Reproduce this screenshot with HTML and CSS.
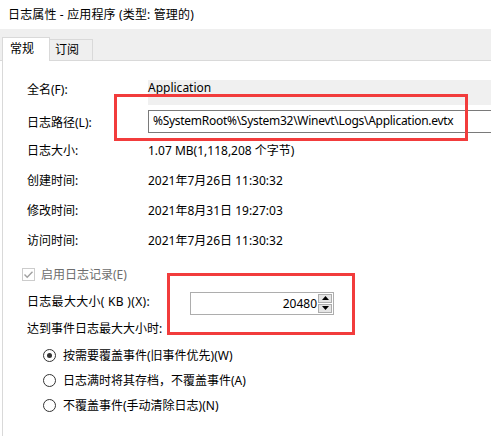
FILE: index.html
```html
<!DOCTYPE html>
<html lang="zh-CN">
<head>
<meta charset="utf-8">
<title>日志属性</title>
<link rel="stylesheet" href="styles.css">
</head>
<body>
<div class="window">
  <div class="titlebar">日志属性 - 应用程序 (类型: 管理的)</div>
  <div class="tabstrip">
    <div class="tab tab-active">常规</div>
    <div class="tab">订阅</div>
  </div>
  <div class="panel">
    <div class="row row-name">
      <span class="label">全名(F):</span>
      <span class="readonly">Application</span>
    </div>
    <div class="row row-path">
      <span class="label">日志路径(L):</span>
      <span class="textbox">%SystemRoot%\System32\Winevt\Logs\Application.evtx</span>
    </div>
    <div class="row row-info r1">
      <span class="label">日志大小:</span>
      <span class="value">1.07 MB(1,118,208 个字节)</span>
    </div>
    <div class="row row-info">
      <span class="label">创建时间:</span>
      <span class="value">2021年7月26日 11:30:32</span>
    </div>
    <div class="row row-info">
      <span class="label">修改时间:</span>
      <span class="value">2021年8月31日 19:27:03</span>
    </div>
    <div class="row row-info">
      <span class="label">访问时间:</span>
      <span class="value">2021年7月26日 11:30:32</span>
    </div>
    <div class="row row-check">
      <span class="checkbox">
        <svg width="13" height="13" viewBox="0 0 13 13"><rect x="0.5" y="0.5" width="12" height="12" fill="#fff" stroke="#cccccc"/><path d="M2.5 6.5 L5.2 9.2 L10.5 3.8" fill="none" stroke="#a0a0a0" stroke-width="1.4"/></svg>
      </span>
      <span class="disabled">启用日志记录(E)</span>
    </div>
    <div class="row row-size">
      <span class="label label-size">日志最大大小( KB )(X):</span>
      <span class="spinbox">
        <span class="spin-value">20480</span>
        <span class="spin-buttons">
          <span class="spin-btn"><svg width="7" height="4" viewBox="0 0 7 4"><path d="M0 4 L3.5 0 L7 4 Z" fill="#000"/></svg></span>
          <span class="spin-btn"><svg width="7" height="4" viewBox="0 0 7 4"><path d="M0 0 L3.5 4 L7 0 Z" fill="#000"/></svg></span>
        </span>
      </span>
    </div>
    <div class="row row-when">
      <span class="label">达到事件日志最大大小时:</span>
    </div>
    <div class="row row-radio first">
      <span class="radio checked"></span>
      <span>按需要覆盖事件(旧事件优先)(W)</span>
    </div>
    <div class="row row-radio">
      <span class="radio"></span>
      <span>日志满时将其存档，不覆盖事件(A)</span>
    </div>
    <div class="row row-radio">
      <span class="radio"></span>
      <span>不覆盖事件(手动清除日志)(N)</span>
    </div>
    <div class="mark mark-path"></div>
    <div class="mark mark-size"></div>
  </div>
</div>
</body>
</html>
```

FILE: styles.css
```css
html, body {
  margin: 0;
  padding: 0;
  background: #ffffff;
}
body {
  font-family: "Noto Sans", "Noto Sans CJK SC", sans-serif;
  font-size: 12px;
  color: #000;
  width: 491px;
  height: 436px;
  overflow: hidden;
}
.window {
  width: 491px;
  height: 436px;
  display: flex;
  flex-direction: column;
}
.titlebar {
  height: 29px;
  line-height: 29px;
  padding-left: 8px;
  white-space: nowrap;
  letter-spacing: 0.15px;
}
.tabstrip {
  height: 31px;
  background: #efefef;
  border-bottom: 1px solid #d9d9d9;
  display: flex;
  align-items: flex-end;
  padding-left: 2px;
  position: relative;
}
.tab {
  height: 20px;
  line-height: 19px;
  padding: 0 13px 0 5px;
  border: 1px solid #d9d9d9;
  border-bottom: none;
  border-left: none;
  background: #efefef;
  white-space: nowrap;
}
.tab-active {
  height: 23px;
  line-height: 22px;
  margin-bottom: -1px;
  background: #fff;
  border-left: 1px solid #d9d9d9;
  padding: 0 15px 0 7px;
}
.panel {
  flex: 1;
  border-left: 1px solid #d9d9d9;
  margin-left: 2px;
  position: relative;
  padding-top: 19px;
  display: flex;
  flex-direction: column;
}
.row {
  display: flex;
  align-items: center;
  white-space: nowrap;
  padding-left: 24px;
}
.label {
  width: 121px;
  flex: none;
}
.row-name {
  height: 25px;
  align-items: flex-start;
}
.readonly {
  flex: 1;
  height: 25px;
  background: #f0f0f0;
  line-height: 16px;
}
.row-path {
  margin-top: 5px;
  height: 23px;
}
.textbox {
  flex: 1;
  height: 21px;
  line-height: 20px;
  border: 1px solid #7a7a7a;
  border-right: none;
  padding-left: 4px;
  letter-spacing: -0.28px;
}
.row-info {
  height: 22px;
  margin-top: 8px;
}
.row-info.r1 {
  margin-top: 6px;
}
.row-check {
  height: 22px;
  margin-top: 12px;
  padding-left: 19px;
}
.checkbox {
  width: 13px;
  height: 13px;
  margin-right: 6px;
  display: flex;
}
.disabled {
  color: #6d6d6d;
}
.row-size {
  margin-top: 7px;
  height: 22px;
}
.label-size {
  width: 163px;
  margin-top: -4px;
  letter-spacing: 0.3px;
}
.spinbox {
  width: 142px;
  height: 21px;
  border: 1px solid #adadad;
  display: flex;
  justify-content: flex-end;
  align-items: center;
}
.spin-value {
  padding-right: 1px;
}
.spin-buttons {
  width: 14px;
  height: 19px;
  display: flex;
  flex-direction: column;
  margin-right: 1px;
  gap: 1px;
}
.spin-btn {
  flex: 1;
  background: #e5e5e5;
  border: 1px solid #adadad;
  display: flex;
  align-items: center;
  justify-content: center;
}
.row-when {
  height: 22px;
  margin-top: 3px;
}
.row-radio {
  height: 22px;
  margin-top: 3px;
  padding-left: 40px;
}
.row-radio.first {
  margin-top: 5px;
}
.radio {
  width: 11px;
  height: 11px;
  border: 1px solid #333;
  border-radius: 50%;
  margin-right: 7px;
  position: relative;
  flex: none;
}
.radio.checked::after {
  content: "";
  position: absolute;
  left: 3px;
  top: 3px;
  width: 5px;
  height: 5px;
  border-radius: 50%;
  background: #333;
}
.mark {
  position: absolute;
  border: 3px solid #f23c3c;
  box-sizing: border-box;
}
.mark-path {
  left: 111px;
  top: 33px;
  width: 354px;
  height: 47px;
}
.mark-size {
  left: 164px;
  top: 212px;
  width: 188px;
  height: 62px;
}
```
